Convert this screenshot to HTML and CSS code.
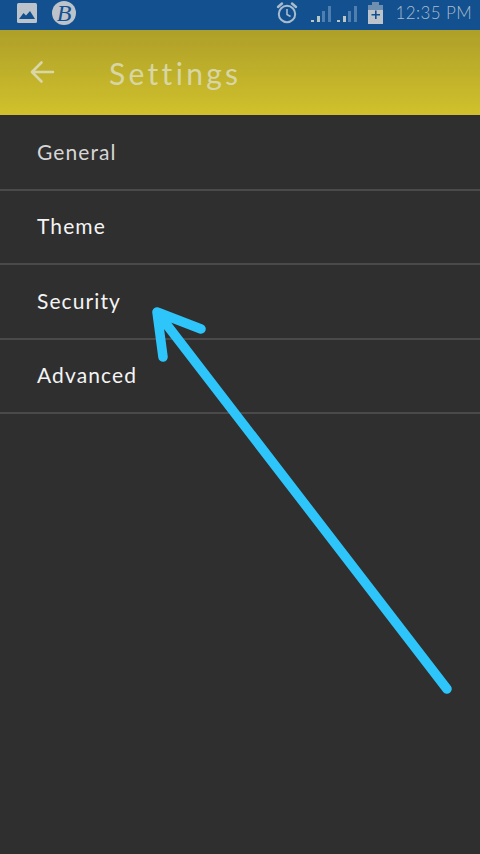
FILE: index.html
```html
<!DOCTYPE html>
<html lang="en">
<head>
<meta charset="utf-8">
<title>Settings</title>
<link rel="stylesheet" href="styles.css">
</head>
<body>
<div class="screen">
  <header class="status">
    <div class="status-left">
      <svg class="ic-picture" width="20" height="20" viewBox="0 0 20 20"><rect x="0" y="0" width="20" height="20" rx="1.5" fill="#bcc3ca"/><path d="M2 16 L6.5 10 L9 12.5 L13 8 L18 16 Z" fill="#12508f"/></svg>
      <span class="badge">B</span>
    </div>
    <div class="status-right">
      <svg width="22" height="24" viewBox="0 0 22 24"><circle cx="11" cy="13" r="8.2" fill="none" stroke="#a9bccd" stroke-width="2"/><path d="M11 8 V13.5 L14.5 15.5" fill="none" stroke="#a9bccd" stroke-width="1.6"/><path d="M2 6 L6 2.5 M20 6 L16 2.5" stroke="#a9bccd" stroke-width="2.4" stroke-linecap="round"/></svg>
      <svg class="ic-signal" width="48" height="18" viewBox="0 0 48 18"><path d="M1 16h3v2H1zM7 12h3v6H7z" fill="#b9c8c4"/><path d="M12 7h3v11h-3zM18 2h3v16h-3z" fill="#4f7fae"/><path d="M27 16h3v2h-3zM33 12h3v6h-3z" fill="#b9c8c4"/><path d="M38 7h3v11h-3zM44 2h3v16h-3z" fill="#4f7fae"/></svg>
      <svg class="ic-battery" width="15" height="22" viewBox="0 0 15 22"><path d="M4 0h7v3H4z" fill="#6f8fb0"/><path d="M0 3h15v5H0z" fill="#6f8fb0"/><path d="M0 8h15v14H0z" fill="#bcc3ca"/><path d="M7 8.500h1.600v3.500H12v1.500H8.600V17H7v-3.500H3.500V12H7z" fill="#12508f"/></svg>
      <span class="clock">12:35 PM</span>
    </div>
  </header>
  <div class="toolbar">
    <svg class="ic-back" width="26" height="24" viewBox="0 0 26 24"><path d="M24 12 H3 M12.500 2.500 L3 12 L12.500 21.500" fill="none" stroke="#d9d7a8" stroke-width="2.600" stroke-linecap="round" stroke-linejoin="round"/></svg>
    <h1 class="title">Settings</h1>
  </div>
  <ul class="menu">
    <li class="item item-dim">General</li>
    <li class="item">Theme</li>
    <li class="item">Security</li>
    <li class="item">Advanced</li>
  </ul>
  <svg class="pointer" width="480" height="854" viewBox="0 0 480 854"><path d="M447 689 L157 312 M201 329 L157 312 L163 357" fill="none" stroke="#2ec5fb" stroke-width="9.500" stroke-linecap="round" stroke-linejoin="round"/></svg>
</div>
</body>
</html>
```
FILE: styles.css
```css
* { box-sizing: border-box; }
html, body { margin: 0; padding: 0; }
body { width: 480px; height: 854px; overflow: hidden; background: #2f2f2f; font-family: "Lato", "Open Sans", sans-serif; }
.screen { position: relative; width: 480px; height: 854px; display: flex; flex-direction: column; background: #2f2f2f; }
.status { height: 30px; flex: none; display: flex; justify-content: space-between; align-items: center; padding: 0 8px 5px 17px; background: #12508f; overflow: hidden; }
.status-left { display: flex; align-items: center; gap: 15px; }
.ic-picture { display: block; }
.badge { width: 24px; height: 24px; border-radius: 50%; background: #bcc3ca; color: #12508f; font: italic 400 24px/24px "Liberation Serif", serif; text-align: center; }
.status-right { display: flex; align-items: center; }
.status-right svg { display: block; flex: none; }
.ic-signal { margin: 0 10px 0 12px; }
.ic-battery { margin-right: 12px; }
.clock { color: #a9bccd; font-size: 17px; font-weight: 300; letter-spacing: 0.4px; white-space: nowrap; }
.toolbar { height: 85px; flex: none; display: flex; align-items: center; padding: 0 0 0 29px; gap: 54px; background: linear-gradient(#ae9f29, #d0c12c); }
.ic-back { display: block; margin-top: -2px; }
.title { margin: 0; color: #d8d6a4; font-size: 30px; font-weight: 400; letter-spacing: 3.3px; }
.menu { list-style: none; margin: 1px 0 0; padding: 0; }
.item { height: 74.500px; padding-left: 37px; display: flex; align-items: center; padding-bottom: 2px; border-bottom: 2px solid #4a4a4a; color: #f4f4f4; font-size: 21px; letter-spacing: 1.1px; }
.item-dim { color: #d6d6d6; }
.pointer { position: absolute; left: 0; top: 0; }
```
